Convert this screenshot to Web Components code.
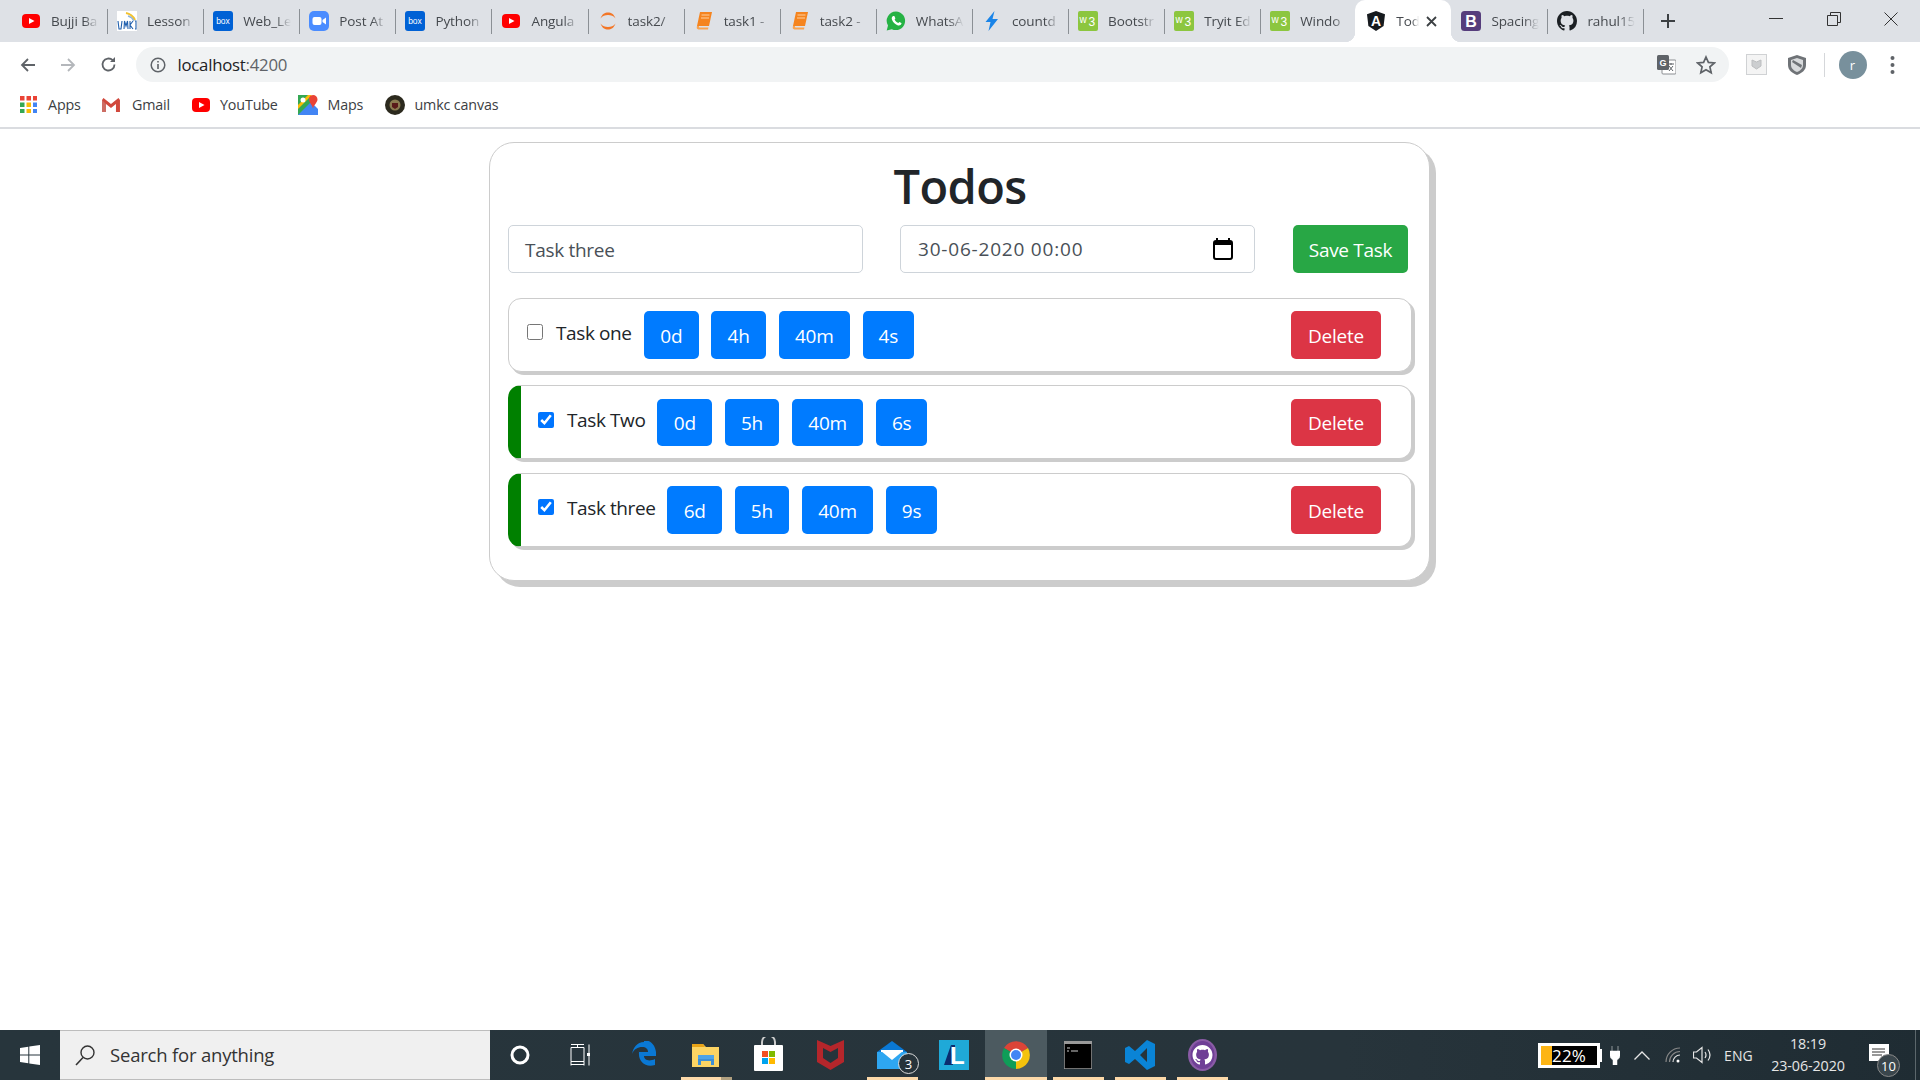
<!DOCTYPE html>
<html lang="en"><head><meta charset="utf-8"><title>Todos</title>
<style>
html,body{margin:0;padding:0;height:100%;background:#fff}
body{width:1920px;height:1080px;overflow:hidden;display:flex;flex-direction:column;font-family:"Open Sans","Noto Sans","Liberation Sans",sans-serif;color:#212529}
todo-main{flex:1}
</style></head>
<body>
<browser-tabs>
<chrome-tab icon="yt">Bujji Ba</chrome-tab><chrome-tab icon="umkc">Lesson</chrome-tab><chrome-tab icon="box">Web_Le</chrome-tab><chrome-tab icon="zoom">Post At</chrome-tab><chrome-tab icon="box">Python</chrome-tab><chrome-tab icon="yt">Angula</chrome-tab><chrome-tab icon="jup">task2/</chrome-tab><chrome-tab icon="book">task1 -</chrome-tab><chrome-tab icon="book">task2 -</chrome-tab><chrome-tab icon="wa">WhatsA</chrome-tab><chrome-tab icon="bolt">countd</chrome-tab><chrome-tab icon="w3">Bootstr</chrome-tab><chrome-tab icon="w3">Tryit Ed</chrome-tab><chrome-tab icon="w3" nosep>Windo</chrome-tab><chrome-tab icon="ng" active>Todos</chrome-tab><chrome-tab icon="bs" style="width:95px;padding-left:10px">Spacing</chrome-tab><chrome-tab icon="gh" style="width:96px">rahul15</chrome-tab>
</browser-tabs>
<browser-toolbar></browser-toolbar>
<bookmark-bar></bookmark-bar>
<todo-main>
  <todo-card>
    <task-row label="Task one" lw="75" d="0d" h="4h" m="40m" s="4s"></task-row>
    <task-row label="Task Two" lw="77.4" done d="0d" h="5h" m="40m" s="6s"></task-row>
    <task-row label="Task three" lw="87.3" done d="6d" h="5h" m="40m" s="9s"></task-row>
  </todo-card>
</todo-main>
<win-taskbar></win-taskbar>
<script>
const OCTO='M8 0C3.58 0 0 3.58 0 8c0 3.54 2.29 6.53 5.47 7.59.4.07.55-.17.55-.38 0-.19-.01-.82-.01-1.49-2.01.37-2.53-.49-2.69-.94-.09-.23-.48-.94-.82-1.13-.28-.15-.68-.52-.01-.53.63-.01 1.08.58 1.23.82.72 1.21 1.87.87 2.33.66.07-.52.28-.87.51-1.07-1.78-.2-3.64-.89-3.64-3.95 0-.87.31-1.59.82-2.15-.08-.2-.36-1.02.08-2.12 0 0 .67-.21 2.2.82.64-.18 1.32-.27 2-.27.68 0 1.36.09 2 .27 1.53-1.04 2.2-.82 2.2-.82.44 1.1.16 1.92.08 2.12.51.56.82 1.27.82 2.15 0 3.07-1.87 3.75-3.65 3.95.29.25.54.73.54 1.48 0 1.07-.01 1.93-.01 2.2 0 .21.15.46.55.38A8.013 8.013 0 0016 8c0-4.42-3.58-8-8-8z';
const s=(w,vb,body,extra='')=>`<svg width="${w}" height="${w}" viewBox="0 0 ${vb} ${vb}" style="display:block;flex:none;${extra}">${body}</svg>`;
const ICON={
 yt:w=>s(w,20,'<rect x="1" y="3" width="18" height="14" rx="4" fill="#f00"/><path d="M8 7l5.500 3L8 13z" fill="#fff"/>'),
 umkc:w=>s(w,20,'<rect width="20" height="20" fill="#fff"/><path d="M9 2q6 1 9 7" stroke="#f2c230" stroke-width="2" fill="none"/><path d="M11 5q4 1 6 5" stroke="#8fb4dc" stroke-width="1.400" fill="none"/><path d="M1 10l1 8 2 0 1-8M7 18l.5-8 1.500 5 1.500-5 .5 8M13 10v8M13 14l3-4M13 14l3 4M18 10h1v8h-1" stroke="#1f5fae" stroke-width="1.100" fill="none"/>'),
 box:w=>s(w,20,'<rect width="20" height="20" rx="3" fill="#0061d5"/><text x="10" y="13" font-size="8.500" font-family="Liberation Sans" text-anchor="middle" fill="#fff">box</text>'),
 zoom:w=>s(w,20,'<rect width="20" height="20" rx="5" fill="#4a8cff"/><rect x="3.500" y="6" width="9" height="8" rx="2" fill="#fff"/><path d="M13.500 9l3.500-2.500v7L13.500 11z" fill="#fff"/>'),
 jup:w=>s(w,20,'<path d="M2.500 7.500C4 3 7 1.500 10 1.500s6 1.500 7.500 6C15.500 4.800 13 4 10 4S4.500 4.800 2.500 7.500z" fill="#f37626"/><path d="M2.500 12.500C4 17 7 18.500 10 18.500s6-1.500 7.500-6C15.500 15.200 13 16 10 16s-5.500-.8-7.500-3.500z" fill="#f37626"/>'),
 book:w=>s(w,20,'<path d="M6 1h12l-3 14H3z" fill="#f5841f"/><path d="M3 15q-1 3 1.500 3.500H14l.4-2H6q-1.500 0-1-1.500z" fill="#f9a350"/><path d="M7.500 4h8M7 7h8" stroke="#ffd0a0" stroke-width="1"/>'),
 wa:w=>s(w,20,'<path d="M10 .5a9.300 9.300 0 0 0-8 14L.7 19.500l5.100-1.300A9.300 9.300 0 1 0 10 .5z" fill="#25b244"/><path d="M6.800 5.200c-.7.600-1.500 1.800-.8 3.500 1.100 2.700 3.300 4.800 6 5.700 1.700.5 2.900-.4 3.300-1.300.2-.6.200-1.100.1-1.200l-2.100-1-.9 1.100c-1.600-.5-3-1.900-3.800-3.500l.8-.9-.9-2.300c-.4-.3-1.200-.3-1.700-.1z" fill="#fff"/>'),
 bolt:w=>s(w,20,'<path d="M12.500 0L3.500 11h5L6.500 20 16 8h-5.500z" fill="#1a84e8"/>'),
 w3:w=>s(w,20,'<rect width="20" height="20" rx="2" fill="#8cc63f"/><text x="1.500" y="12" font-size="10" font-family="Liberation Sans" fill="#fff">w</text><text x="10.500" y="14.500" font-size="12" font-family="Liberation Sans" fill="#fff">3</text>'),
 ng:w=>s(w,20,'<path d="M10 0L1 3.200l1.400 11.900L10 20l7.600-4.900L19 3.200z" fill="#161a1e"/><text x="10" y="14.500" font-size="14" font-weight="700" font-family="Liberation Sans" text-anchor="middle" fill="#fff">A</text>'),
 bs:w=>s(w,20,'<rect width="20" height="20" rx="3.500" fill="#563d7c"/><text x="10" y="15.500" font-size="16" font-weight="700" font-family="Liberation Sans" text-anchor="middle" fill="#fff">B</text>'),
 gh:w=>s(w,16,`<path d="${OCTO}" fill="#1b1f23"/>`),
};
function def(name,fn,setup){
  customElements.define(name,class extends HTMLElement{
    constructor(){super();this.attachShadow({mode:'open'});}
    connectedCallback(){this.shadowRoot.innerHTML=fn(this);if(setup)setup(this);}
  });
}
def('browser-tabs',()=>`<style>
:host{display:flex;height:42px;flex:none;background:#dee1e6;padding-left:10px;box-sizing:border-box;align-items:stretch}
.plus{width:20px;margin-left:18px;align-self:center}
.wc{margin-left:auto;display:flex}
.wc div{width:57.500px;height:38px;display:flex;align-items:center;justify-content:center}
</style><slot></slot>
<div class="plus"><svg width="16" height="16" viewBox="0 0 16 16" style="display:block"><path d="M8 1v14M1 8h14" stroke="#3c4043" stroke-width="2"/></svg></div>
<div class="wc">
<div><svg width="14" height="14" viewBox="0 0 14 14"><path d="M0 6.500h14" stroke="#333" stroke-width="1"/></svg></div>
<div><svg width="14" height="16" viewBox="0 0 14 16"><path d="M.5 4.500h10v10H.5zM3.500 4.500v-3h10v10h-3" fill="none" stroke="#333"/></svg></div>
<div><svg width="14" height="14" viewBox="0 0 14 14"><path d="M.5.500l13 13M13.500.500l-13 13" stroke="#333"/></svg></div>
</div>`);
def('chrome-tab',h=>{const act=h.hasAttribute('active');return `<style>
:host{display:flex;width:96.100px;flex:none;height:42px;align-items:center;box-sizing:border-box;padding-left:11px;position:relative;font-size:13.500px;color:#45494e}
:host([active]){background:#fff;border-radius:10px 10px 0 0;z-index:1}
.ic{width:20px;flex:none}
.t{margin-left:10px;width:${act?'23':'48'}px;overflow:hidden;white-space:nowrap;-webkit-mask-image:linear-gradient(to right,#000 68%,transparent);mask-image:linear-gradient(to right,#000 68%,transparent);line-height:20px;letter-spacing:-.1px}
.sep{position:absolute;right:-2px;top:9px;height:25px;width:1px;background:#8b9095}
.x{margin-left:7px;flex:none}
.fl{position:absolute;bottom:0;width:10px;height:10px}
.fl.l{left:-10px;background:radial-gradient(circle at 0 0,transparent 10px,#fff 10.500px)}
.fl.r{right:-10px;background:radial-gradient(circle at 100% 0,transparent 10px,#fff 10.500px)}
</style><div class="ic">${ICON[h.getAttribute('icon')](20)}</div><div class="t"><slot></slot></div>
${act?'<svg class="x" width="11" height="11" viewBox="0 0 11 11"><path d="M1 1l9 9M10 1l-9 9" stroke="#3c4043" stroke-width="1.800"/></svg><div class="fl l"></div><div class="fl r"></div>':''}
${act||h.hasAttribute('nosep')?'':'<div class="sep"></div>'}`});
def('browser-toolbar',()=>`<style>
:host{display:flex;height:40px;flex:none;background:#fff;align-items:flex-end;box-sizing:border-box;padding-left:8px}
.nav{width:40px;height:35px;display:flex;align-items:center;justify-content:center}
.addr{width:1593px;height:35px;margin-left:7.500px;background:#f1f3f4;border-radius:18px;display:flex;align-items:center;box-sizing:border-box;padding-left:14px;font-size:16.800px;letter-spacing:-.25px;color:#5f6368}
.addr b{font-weight:400;color:#202124}
.txt{margin-left:12px}
.end{margin-left:auto;display:flex;align-items:center}
.r{height:35px;display:flex;align-items:center}
.av{width:28px;height:28px;border-radius:50%;background:#78909c;color:#fff;font-size:13px;display:flex;align-items:center;justify-content:center;margin-left:14px}
</style>
<div class="nav"><svg width="16" height="16" viewBox="0 0 16 16"><path d="M15 8H2M8 2L2 8l6 6" fill="none" stroke="#5f6368" stroke-width="1.800"/></svg></div>
<div class="nav"><svg width="16" height="16" viewBox="0 0 16 16"><path d="M1 8h13M8 2l6 6-6 6" fill="none" stroke="#b4b7bb" stroke-width="1.800"/></svg></div>
<div class="nav"><svg width="17" height="17" viewBox="0 0 17 17"><path d="M14.500 8.500a6 6 0 1 1-1.800-4.300" fill="none" stroke="#5f6368" stroke-width="1.800"/><path d="M15 1v5h-5z" fill="#5f6368"/></svg></div>
<div class="addr">
 <svg width="16" height="16" viewBox="0 0 16 16"><circle cx="8" cy="8" r="6.800" fill="none" stroke="#5f6368" stroke-width="1.500"/><path d="M8 7v5M8 4v1.600" stroke="#5f6368" stroke-width="1.600"/></svg>
 <span class="txt"><b>localhost</b>:4200</span>
 <div class="end">
  <svg width="19" height="20" viewBox="0 0 19 20"><rect x="5" y="5" width="14" height="14" rx="1" fill="#fff" stroke="#8a8d91"/><rect width="12" height="15" rx="1.500" fill="#5f6368"/><text x="6" y="11" font-size="9" font-weight="700" font-family="Liberation Sans" text-anchor="middle" fill="#fff">G</text><path d="M11 9h6M14 8v2M12 16l4-5M12 11l4 5" stroke="#5f6368" stroke-width="1"/></svg>
  <svg style="margin:0 13px 0 20px" width="20" height="20" viewBox="0 0 20 20"><path d="M10 2l2.400 5.400 5.900.6-4.400 3.900 1.300 5.800L10 14.700l-5.200 3 1.300-5.800L1.700 8l5.900-.6z" fill="none" stroke="#5f6368" stroke-width="1.700"/></svg>
 </div>
</div>
<div class="r" style="margin-left:17px"><svg width="21" height="21" viewBox="0 0 21 21"><rect x=".5" y=".5" width="20" height="20" fill="#f4f4f4" stroke="#d0d2d4"/><path d="M6 6l4.500 2L15 6v6l-4.500 3L6 12z" fill="#ccced0" stroke="#bcbec0"/></svg></div>
<div class="r" style="margin-left:20px"><svg width="20" height="22" viewBox="0 0 20 22"><path d="M10 1l9 3v7c0 5-4 8-9 10C5 19 1 16 1 11V4z" fill="#6f7377"/><path d="M10 4l6 2v5c0 3.500-3 5.800-6 7-3-1.200-6-3.500-6-7V6z" fill="#d8dadc"/><path d="M5 8l9 6 1-3-9-5z" fill="#6f7377"/></svg></div>
<div class="r" style="margin-left:17px"><div style="width:1px;height:24px;background:#d5d7da"></div></div>
<div class="r"><div class="av">r</div></div>
<div class="r" style="margin-left:23px"><svg width="5" height="20" viewBox="0 0 5 20"><circle cx="2.500" cy="3" r="2" fill="#5f6368"/><circle cx="2.500" cy="10" r="2" fill="#5f6368"/><circle cx="2.500" cy="17" r="2" fill="#5f6368"/></svg></div>`);
def('bookmark-bar',()=>{
 let apps='';const col=['#ea4335','#ea4335','#ea4335','#34a853','#fbbc05','#4285f4','#34a853','#fbbc05','#4285f4'];
 col.forEach((c,i)=>apps+=`<rect x="${(i%3)*6.500}" y="${Math.floor(i/3)*6.500}" width="4.500" height="4.500" fill="${c}"/>`);
 return `<style>
:host{display:flex;height:47px;flex:none;background:#fff;border-bottom:2px solid #dadce0;box-sizing:border-box;align-items:center;padding:0 0 0 20px;font-size:14.300px;color:#3c4043;letter-spacing:-.15px}
.b{display:flex;align-items:center;flex:none}
.b span{margin-left:10px}
</style>
<div class="b" style="width:61px"><svg width="17" height="17" viewBox="0 0 17 17">${apps}</svg><span style="margin-left:11px">Apps</span></div>
<div class="b" style="margin-left:21px;width:68px"><svg width="18" height="14" viewBox="0 0 18 14"><path d="M0 2v12h4V6l5 4 5-4v8h4V2l-1.500-2L9 6 1.500 0z" fill="#d1483c"/><path d="M0 2v12h4V6z" fill="#c5c5c5" opacity=".3"/></svg><span style="margin-left:12px">Gmail</span></div>
<div class="b" style="margin-left:20.500px;width:86px">${ICON.yt(20)}<span style="margin-left:9.500px">YouTube</span></div>
<div class="b" style="margin-left:21px;width:66px"><svg width="20" height="20" viewBox="0 0 20 20"><path d="M0 0h13v20H0z" fill="#34a853"/><path d="M0 20L13 7l7 7v6z" fill="#4285f4"/><path d="M0 14L14 0h-4L0 10z" fill="#fbbc05"/><circle cx="5" cy="5" r="2.500" fill="#fff"/><path d="M15 0a4.500 4.500 0 0 1 4.500 4.500c0 3-3.500 5-4.500 9-1-4-4-6-4-9A4.500 4.500 0 0 1 15 0z" fill="#ea4335"/></svg><span>Maps</span></div>
<div class="b" style="margin-left:21px"><svg width="20" height="20" viewBox="0 0 20 20"><circle cx="10" cy="10" r="10" fill="#2c2a1e"/><circle cx="10" cy="10" r="5.500" fill="#8b7a50"/><path d="M7 8h6v4l-3 2-3-2z" fill="#5a1a1a"/></svg><span>umkc canvas</span></div>`;
});
def('todo-main',()=>`<style>:host{display:block;padding-top:13px;min-height:0}</style><slot></slot>`);
def('todo-card',()=>`<style>
:host{display:block;width:941px;height:439px;margin-left:489px;box-sizing:border-box;border:1px solid #ccc;border-radius:25px;box-shadow:6px 6px 0 #ccc;padding:13.250px 17px 0 18px;background:#fff}
h1{margin:0 0 9px;font-size:47px;line-height:60px;font-weight:600;text-align:center;color:#212529;letter-spacing:-.6px}
.f{display:flex;height:47.500px;margin-bottom:25px}
.in{width:355px;box-sizing:border-box;border:1px solid #ced4da;border-radius:5px;display:flex;align-items:center;font-size:19px;color:#495057;padding-left:16px;letter-spacing:-.3px}
.d{margin-left:37px;padding:0 21px 0 17px;justify-content:space-between;letter-spacing:.8px}
.in.n span{margin-top:2px}
.sv{margin-left:38px;width:115px;box-sizing:border-box;background:#28a745;color:#fff;border-radius:5px;display:flex;align-items:center;justify-content:center;font-size:19px;letter-spacing:-.3px;padding-top:1px}
.l{display:flex;flex-direction:column;gap:13.500px}
</style>
<h1>Todos</h1>
<div class="f">
 <div class="in n"><span>Task three</span></div>
 <div class="in d"><span>30-06-2020 00:00</span>
  <svg width="20" height="22" viewBox="0 0 20 22"><path d="M4 0v4M16 0v4" stroke="#000" stroke-width="2"/><rect x="1" y="3" width="18" height="18" rx="2" fill="#fff" stroke="#000" stroke-width="2"/><rect x="1" y="3" width="18" height="4" fill="#000"/></svg>
 </div>
 <div class="sv">Save Task</div>
</div>
<div class="l"><slot></slot></div>`);
def('task-row',h=>{const a=n=>h.getAttribute(n);const done=h.hasAttribute('done');
 const btn=(t,w)=>`<div class="b" style="width:${w}px">${t}</div>`;
 return `<style>
:host{display:flex;height:74px;box-sizing:border-box;border:1px solid #ccc;border-radius:13px;box-shadow:3px 3px 0 #ccc;background:#fff;align-items:center;padding:0 30px 0 18px;font-size:19px;color:#212529}
:host([done]){border-left:13px solid #008000;padding-left:17px}
input{width:16px;height:16px;margin:0;flex:none;margin-bottom:5px}
.lb{margin-left:13px;flex:none;white-space:nowrap;margin-bottom:4px;letter-spacing:-.4px}
.bs{display:flex;gap:12.500px;margin-left:13px}
.b{height:47.500px;background:#007bff;color:#fff;border-radius:5px;display:flex;align-items:center;justify-content:center;letter-spacing:-.2px;box-sizing:border-box;padding-top:2px}
.del{background:#dc3545;margin-left:auto}
</style>
<input type="checkbox" ${done?'checked':''}>
<div class="lb" style="width:${a('lw')}px">${a('label')}</div>
<div class="bs">${btn(a('d'),54.75)}${btn(a('h'),54.75)}${btn(a('m'),71.5)}${btn(a('s'),51.5)}</div>
<div class="b del" style="width:90px">Delete</div>`});
def('win-taskbar',()=>{
 const slot=(svg,u,st='')=>`<div class="s${u?' u':''}" style="${st}">${svg}</div>`;
 const win=`<svg width="20" height="20" viewBox="0 0 20 20"><path d="M0 3l8.300-1.200V9.500H0zM9.300 1.600L20 0v9.500H9.300zM0 10.500h8.300v7.700L0 17zM9.300 10.500H20V20L9.300 18.400z" fill="#fff"/></svg>`;
 const chrome=`<svg width="28" height="28" viewBox="0 0 28 28"><path d="M14 14L2 7A14 14 0 0 1 26 7z" fill="#db4437"/><path d="M14 14L26 7A14 14 0 0 1 14 28z" fill="#f4c20d"/><path d="M14 14L14 28A14 14 0 0 1 2 7z" fill="#0f9d58"/><circle cx="14" cy="14" r="6.500" fill="#fff"/><circle cx="14" cy="14" r="5" fill="#4285f4"/></svg>`;
 return `<style>
:host{display:flex;height:50px;flex:none;background:linear-gradient(to right,#27353c,#27343b 70%,#1f2c33);color:#e6e6e6;font-family:"Open Sans","Noto Sans",sans-serif;position:relative}
.start{width:60px;display:flex;align-items:center;justify-content:center}
.search{width:430px;box-sizing:border-box;background:#f0f0f0;border-top:1px solid #bdbdbd;border-bottom:1px solid #bdbdbd;display:flex;align-items:center;padding-left:15px;font-size:18.500px;color:#333;letter-spacing:-.2px}
.search span{margin-left:15px;margin-bottom:2px}
.s{width:62px;height:50px;display:flex;align-items:center;justify-content:center;flex:none;box-sizing:border-box;position:relative}
.s.u::after{content:"";position:absolute;left:5.500px;right:5.500px;bottom:0;height:3px;background:#fcd9a9}
.s.ac::after{left:0;right:0}
.s.st::before{content:"";position:absolute;left:46px;width:11px;bottom:0;height:3px;background:#b0a080;z-index:1}
.badge{position:absolute;border-radius:50%;background:#27343b;border:1px solid #ddd;display:flex;align-items:center;justify-content:center;color:#fff}
.tray{margin-left:auto;display:flex;align-items:center;height:50px}
.bat{width:62px;height:25px;box-sizing:border-box;border:3px solid #fff;background:#000;display:flex;font-size:17px;position:relative;line-height:19px;color:#fff}
.bat i{width:11px;background:#fdb515;display:block}
.bat span{letter-spacing:.2px}
.nub{width:2px;height:13px;background:#fff}
.clock{width:76px;text-align:center;font-size:14.300px;line-height:22px;margin-left:17px;color:#e6e6e6;white-space:nowrap;letter-spacing:-.1px}
.eng{font-size:14px;margin-left:11px;letter-spacing:.1px;width:29px;white-space:nowrap}
.nt{position:relative;margin-left:23px;width:31px;height:50px;display:flex;align-items:center}
.end{width:1px;height:50px;background:#5c676c;margin-left:15px;margin-right:4px}
</style>
<div class="start">${win}</div>
<div class="search"><svg width="20" height="21" viewBox="0 0 20 21"><circle cx="12.500" cy="7.500" r="6.500" fill="none" stroke="#333" stroke-width="1.400"/><path d="M8 12.500L1 20" stroke="#333" stroke-width="1.600"/></svg><span>Search for anything</span></div>
${slot('<svg width="20" height="20" viewBox="0 0 20 20"><circle cx="10" cy="10" r="8" fill="none" stroke="#fff" stroke-width="3"/></svg>',0,'width:60px')}
${slot('<svg width="20" height="22" viewBox="0 0 20 22"><path d="M1 .5h13M7.500.5v3M1 3.500h13v14H1zM1 20.500h13M1 17.500v4M14 17.500v4M19 .5v21" fill="none" stroke="#fff"/><rect x="17" y="9" width="3" height="3" fill="#fff"/></svg>',0,'width:60px;margin-right:3px')}
${slot('<svg width="24" height="28" viewBox="0 0 24 28"><path d="M12 1C5 1 1 7 0 13c2-5 6-7 10-7 4 0 6 2 6 5H7c-1-1 0-1 0 0-1 9 6 16 16 13v-6c-6 3-11 1-11-3h12c1-8-4-16-12-16z" fill="#0a78d4"/></svg>',0)}
<div class="s u st"><svg width="28" height="26" viewBox="0 0 28 26"><path d="M0 2h11l3 3h13v20H0z" fill="#fcd463"/><path d="M0 2h11l2 3H0z" fill="#e8a317"/><path d="M6 16h16v7h-3v-4h-10v4H6z" fill="#3d8fd6"/><path d="M6 13h16v4H6z" fill="#4da3e8"/></svg></div>
${slot('<svg width="29" height="36" viewBox="0 0 29 36"><path d="M8 9V5a6 6 0 0 1 13 0v4" fill="none" stroke="#ccc" stroke-width="2"/><rect y="8" width="29" height="26" rx="1" fill="#fff"/><rect x="8" y="14" width="6" height="6" fill="#f25022"/><rect x="15" y="14" width="6" height="6" fill="#7fba00"/><rect x="8" y="21" width="6" height="6" fill="#00a4ef"/><rect x="15" y="21" width="6" height="6" fill="#ffb900"/></svg>',0)}
${slot('<svg width="27" height="30" viewBox="0 0 27 30"><path d="M0 0l13.500 6L27 0v22l-13.500 8L0 22z" fill="#b5262b"/><path d="M6 8l7.500 4L21 8v10l-7.500 5L6 18z" fill="#27343b"/></svg>',0)}
<div class="s u">
 <svg width="30" height="28" viewBox="0 0 30 28"><path d="M15 0L0 11v17h30V11z" fill="#0a78d4"/><path d="M0 11h30v17H0z" fill="#2ea6f1"/><path d="M4 11h22v-2H4z" fill="#fff"/><path d="M4 10h22L15 19z" fill="#fff"/></svg>
 <div class="badge" style="width:19px;height:19px;left:37px;top:23px;font-size:13px">3</div>
</div>
${slot('<svg width="30" height="30" viewBox="0 0 30 30"><rect width="30" height="30" fill="#1fa9d8"/><path d="M12 5L5 25h9z" fill="#0b2c6e"/><path d="M12 5h4v4l-2 8z" fill="#0b2c6e"/><text x="11" y="24" font-family="Liberation Sans" font-weight="700" font-size="24" fill="#fff">L</text></svg>',0)}
<div class="s u ac" style="background:#4c5a60">${chrome}</div>
${slot('<svg width="28" height="28" viewBox="0 0 28 28"><rect width="28" height="28" fill="#000" stroke="#999" stroke-width="1.500"/><rect width="28" height="3" fill="#999"/><path d="M3 7h3M3 10h2M7 10h7" stroke="#ccc"/></svg>',1)}
${slot('<svg width="30" height="30" viewBox="0 0 30 30"><path d="M22 0l8 4v22l-8 4L10 19l-6 5-4-2V8l4-2 6 5zM22 8l-7 7 7 7z" fill="#0a84d6"/></svg>',1)}
${slot(`<svg width="29" height="32" viewBox="0 0 29 32"><ellipse cx="14.500" cy="16" rx="14.500" ry="16" fill="#8a5ba6"/><ellipse cx="14.500" cy="16" rx="12" ry="14" fill="#6f3f96"/><g transform="translate(4.500 6) scale(1.250)"><path d="${OCTO}" fill="#fff"/></g></svg>`,1)}
<div class="tray">
 <div class="bat"><i></i><span>22%</span></div><div class="nub"></div>
 <svg style="margin-left:8px" width="10" height="19" viewBox="0 0 10 19"><path d="M2 0v5M8 0v5M0 5h10v5a5 5 0 0 1-3 4v5H3v-5a5 5 0 0 1-3-4z" fill="#fff" stroke="#fff" stroke-width=".5"/></svg>
 <svg style="margin-left:14px" width="16" height="9" viewBox="0 0 16 9"><path d="M.5 8.500L8 1l7.500 7.500" fill="none" stroke="#e6e6e6" stroke-width="1.300"/></svg>
 <svg style="margin-left:15px" width="16" height="16" viewBox="0 0 16 16"><path d="M1 15A14 14 0 0 1 15 1M4.500 15A10.500 10.500 0 0 1 15 4.500" fill="none" stroke="#888" stroke-width="1.200"/><path d="M8 15A7 7 0 0 1 15 8" fill="none" stroke="#ddd" stroke-width="1.200"/><circle cx="13" cy="14" r="1.500" fill="#fff"/></svg>
 <svg style="margin-left:12px" width="20" height="18" viewBox="0 0 20 18"><path d="M.5 6h3L9 1.500v15L3.500 12h-3zM12 6q2 3 0 6M15 3.500q4 5.500 0 11" fill="none" stroke="#e6e6e6" stroke-width="1.200"/></svg>
 <div class="eng">ENG</div>
 <div class="clock">18:19<br>23-06-2020</div>
 <div class="nt"><svg width="20" height="17" viewBox="0 0 20 17" style="margin-bottom:6px"><path d="M0 0h20v17H0z" fill="#fff"/><path d="M3 5h13M3 8h13M3 11h10" stroke="#333"/></svg><div class="badge" style="width:21px;height:21px;left:8px;top:24px;font-size:13px;background:#3a464c;border:1.500px solid #888">10</div></div>
 <div class="end"></div>
</div>`;
});
</script>
</body></html>
